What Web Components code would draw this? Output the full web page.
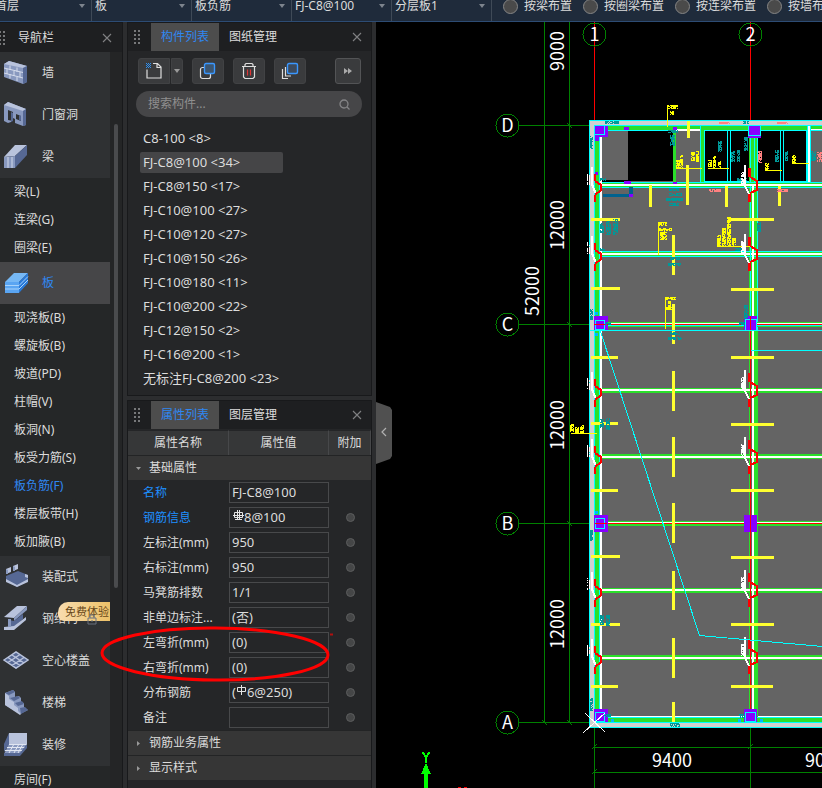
<!DOCTYPE html>
<html lang="zh-CN">
<head>
<meta charset="utf-8">
<title>板负筋</title>
<style>
html,body{margin:0;height:100%;background:#000;overflow:hidden}
body{font:12px/16px "Noto Sans","Noto Sans CJK SC",sans-serif;color:#dcdcdc}
</style>
</head>
<body>
<cad-app></cad-app>
<script>
const define=(name,html,setup)=>{
  const t=document.createElement('template');
  t.innerHTML='<style>*{box-sizing:border-box}button,input,select{font:inherit;color:inherit;margin:0}button{cursor:pointer}</style>'+html;
  customElements.define(name,class extends HTMLElement{
    connectedCallback(){
      if(this.shadowRoot)return;
      const r=this.attachShadow({mode:'open'});
      r.append(t.content.cloneNode(true));
      if(setup)setup(this,r);
    }
  });
};

/* ---------- top option bar ---------- */
define('drop-field',`<style>
:host{display:block;flex:0 0 100px;border-right:1px solid #3f4a57;position:relative}
select{appearance:none;width:100%;height:100%;border:0;background:none;padding:0 20px 0 3px;outline:0;line-height:16px}
option{background:#1f2b3b}
svg{position:absolute;right:6px;top:14px;pointer-events:none}
</style><select></select><svg width="6" height="4"><path d="M0 0h6L3 4z" fill="#7d848d"/></svg>`,
(h,r)=>{const s=r.querySelector('select');s.setAttribute('aria-label',h.getAttribute('label'));s.add(new Option(h.getAttribute('value')));});

define('radio-field',`<style>
:host{display:block;flex:none;line-height:12px}
label{display:flex;align-items:center;gap:6px;height:100%;white-space:nowrap}
input{appearance:none;width:15px;height:15px;border-radius:50%;background:#4a4a4a;border:1px solid #858585}
input:checked{background:#2d8cf0}
</style><label><input type="radio" name="place"><slot></slot></label>`);

define('top-bar',`<style>
:host{display:block;height:22px;overflow:hidden;background:#1f2b3b;border-bottom:1px solid #2d4c74}
div{display:flex;height:32px;margin-top:-10px;margin-left:-8px}
section{display:flex;gap:11px;padding-left:11px}
</style><div>
<drop-field label="楼层" value="首层"></drop-field><drop-field label="构件大类" value="板"></drop-field><drop-field label="构件类型" value="板负筋"></drop-field><drop-field label="构件" value="FJ-C8@100"></drop-field><drop-field label="分层" value="分层板1"></drop-field>
<section><radio-field>按梁布置</radio-field><radio-field>按圈梁布置</radio-field><radio-field>按连梁布置</radio-field><radio-field>按墙布置</radio-field></section></div>`);

/* ---------- shared small parts ---------- */
define('drag-grip',`<style>:host{display:block;width:6px;height:14px}svg{display:block}</style>
<svg width="6" height="14" fill="#77787a"><path d="M0 0h2v2H0zM4 0h2v2H4zM0 4h2v2H0zM4 4h2v2H4zM0 8h2v2H0zM4 8h2v2H4zM0 12h2v2H0zM4 12h2v2H4z"/></svg>`);
define('close-button',`<style>:host{display:block}button{display:block;border:0;background:none;padding:0;width:10px;height:10px}svg{display:block}</style>
<button aria-label="关闭"><svg width="10" height="10" stroke="#808183" stroke-width="1.1"><path d="M1 1l8 8M9 1l-8 8"/></svg></button>`);

/* ---------- navigation ---------- */
const L='#b9c3dc',M='#8999bf',D='#566894';
const navIcons={
wall:`<path d="M1 4l5-3 18 5v16l-4 2L1 17z" fill="${M}"/><path d="M1 4l5-3 18 5-4 2z" fill="${L}"/><path d="M20 8l4-2v16l-4 2z" fill="${D}"/><path d="M1 8l19 4.500M1 13l19 5M7 5.500V10M14 7.500V12M4 9v5M11 11v5M17 12v5M7 14v4.500M14 17v4" stroke="#d5dcec" fill="none"/>`,
door:`<path d="M1 3l4-3 18 7v16l-3 1-8-3v-4l-4-2v5l-3 1-4-2z" fill="${M}"/><path d="M1 3l4-3 18 7-3 2z" fill="${L}"/><path d="M20 9l3-2v16l-3 1z" fill="${D}"/><path d="M5 8l5 2v9l-5-1z" fill="#2f3133"/><path d="M13 12l5 2v5l-5-2z" fill="#2f3133"/><path d="M8 10l2 1v8l-2 1zM16 13l2 1v5l-2-1z" fill="${D}"/>`,
beam:`<path d="M1 13L12 1h12L12 12z" fill="${L}"/><path d="M1 13l11-1v12H1z" fill="${M}"/><path d="M12 12L24 1v10L12 24z" fill="${D}"/><path d="M5 13v11M9 13v11" stroke="${L}" stroke-width="1.500"/>`,
slab:`<path d="M2 12L11 3h14l-9 9z" fill="#76b8f5"/><path d="M2 12h14v11H2z" fill="#5aa5f2"/><path d="M16 12l9-9v10l-9 10z" fill="#2879d8"/><path d="M2 15.500h14l9-9M2 19h14l9-9" stroke="#a8d3fb" fill="none"/>`,
prefab:`<path d="M3 12l12-5 10 4v6l-11 6-11-7z" fill="${D}"/><path d="M3 15l11 6 11-6v3l-11 5-11-5z" fill="${L}"/><path d="M3 5l5-2v5l-5 2zM10 2l5-2v5l-5 2z" fill="${L}"/><path d="M3 5l2 1v4l-2 0zM10 2l2 1v4l-2 0z" fill="${M}"/><path d="M22 10l3 1v3l-3-1z" fill="${L}"/>`,
steel:`<path d="M1 11L14 0h10L11 12z" fill="${L}"/><path d="M11 12L24 0v4L11 15z" fill="${M}"/><path d="M6 14l5 1 9-7v5l-9 8H6z" fill="${D}"/><path d="M1 21l10-1 12-9v3L11 24H1z" fill="${L}"/><path d="M5 13h3v8H5z" fill="${M}"/>`,
hollow:`<path d="M1 12L13 4l12 8-12 9z" fill="${D}"/><path d="M1 12L13 4l12 8-12 8zM5 9.500l12 8M9 7l12 8M5 14.500L17 6.500M9 17.500L21 9.500" stroke="${L}" stroke-width="1.500" fill="none"/>`,
stairs:`<path d="M2 3l8-3 2 2v5l4-1 2 2v4l3 1v4l4 3-8 4L2 15z" fill="${M}"/><path d="M2 3l8-3 2 2-6 3zM7 8l8-2 2 2-6 3zM12 13l7-2 2 3-6 2zM17 18l5-1 3 3-7 4z" fill="${D}"/><path d="M2 3l4 3v3l5 3v3l4 3v3l3 3-1 1L2 15z" fill="${L}"/>`,
finish:`<path d="M6 1h18v12H5z" fill="${L}"/><path d="M6 1L1 12v8l5-7z" fill="${D}"/><path d="M6 12h18l-7 10H1z" fill="${M}"/><path d="M6 12.500h18M4 15.500h18M2 18.500h17M11 12l-5 9M16 12l-5 9M20 12l-5 9" stroke="#e1e6f2" fill="none"/><path d="M1 21h16l7-9v4l-7 8H1z" fill="${D}"/>`};
define('nav-group',`<style>
:host{display:block;background:#2f3133}
:host([active]){background:#464648;color:#2f87f2}
button{display:flex;align-items:center;gap:13px;width:100%;height:42px;border:0;background:none;padding:0 0 0 3px;text-align:left;white-space:nowrap;position:relative}
svg{display:block;flex:none}
::slotted(trial-badge){position:absolute;right:0;top:4px}
</style><button><svg width="26" height="26" viewBox="0 0 26 26"></svg><span></span><slot></slot></button>`,
(h,r)=>{r.querySelector('svg').innerHTML=navIcons[h.getAttribute('icon')];r.querySelector('span').textContent=h.getAttribute('label');});
define('nav-item',`<style>
:host{display:block;background:#252728}
:host([active]){color:#2f87f2}
a{display:flex;align-items:center;height:28px;padding-left:14px;color:inherit;text-decoration:none;white-space:nowrap}
</style><a href="#"><slot></slot></a>`);
define('trial-badge',`<style>
:host{display:block;font-size:11px}
span{display:block;width:52px;height:19px;padding-left:7px;line-height:19px;color:#674719;background:linear-gradient(90deg,#f8dcae,#edc168);border-radius:10px 0 0 6px}
svg{position:absolute;left:29px;top:11px}
</style><span>免费体验</span><svg width="10" height="12" fill="none" stroke="#68717f"><path d="M1 5h8v6H1zM3 5V2h4v3M5 7v2"/></svg>`);
define('nav-panel',`<style>
:host{display:flex;flex-direction:column;flex:0 0 123px;background:#252728;border-top:1px solid #18191b;border-right:1px solid #18191b;overflow:hidden}
header{flex:0 0 29px;display:flex;align-items:center;background:#1e1f21;padding-right:10px}
drag-grip{margin-left:-1px}
h2{flex:1;margin:0 0 0 13px;font:inherit}
.body{flex:1;min-height:0;display:flex;overflow:hidden}
nav{flex:1;min-width:0}
.track{flex:0 0 12px;background:#242526;padding:72px 0 0 4px}
.thumb{width:4px;height:464px;border-radius:2px;background:#4a4b4d}
</style>
<header><drag-grip></drag-grip><h2>导航栏</h2><close-button></close-button></header>
<div class="body"><nav>
<nav-group icon="wall" label="墙"></nav-group><nav-group icon="door" label="门窗洞"></nav-group><nav-group icon="beam" label="梁"></nav-group>
<nav-item>梁(L)</nav-item><nav-item>连梁(G)</nav-item><nav-item>圈梁(E)</nav-item>
<nav-group icon="slab" label="板" active></nav-group>
<nav-item>现浇板(B)</nav-item><nav-item>螺旋板(B)</nav-item><nav-item>坡道(PD)</nav-item><nav-item>柱帽(V)</nav-item><nav-item>板洞(N)</nav-item><nav-item>板受力筋(S)</nav-item><nav-item active>板负筋(F)</nav-item><nav-item>楼层板带(H)</nav-item><nav-item>板加腋(B)</nav-item>
<nav-group icon="prefab" label="装配式"></nav-group><nav-group icon="steel" label="钢结构"><trial-badge></trial-badge></nav-group><nav-group icon="hollow" label="空心楼盖"></nav-group><nav-group icon="stairs" label="楼梯"></nav-group><nav-group icon="finish" label="装修"></nav-group>
<nav-item>房间(F)</nav-item>
</nav><div class="track"><div class="thumb"></div></div></div>`);

/* ---------- dock panels ---------- */
define('dock-panel',`<style>
:host{display:flex;flex-direction:column;background:#252628;border:1px solid #18191b}
header{flex:0 0 28px;display:flex;align-items:center;background:#1e1f21;padding:0 9px 0 6px}
[role=tablist]{flex:1;display:flex;margin-left:11px;height:100%}
button{border:0;background:none;padding:0 10px;height:28px;white-space:nowrap}
button[aria-selected=true]{background:#4d4d4d;color:#2f87f2}
</style><header><drag-grip></drag-grip><div role="tablist"><button role="tab" aria-selected="true"></button><button role="tab" aria-selected="false"></button></div><close-button></close-button></header><slot></slot>`,
(h,r)=>{const n=h.getAttribute('tabs').split(',');r.querySelectorAll('[role=tab]').forEach((b,i)=>b.textContent=n[i]);});

define('tool-row',`<style>
:host{display:flex;gap:9px;padding:7px 10px 7px 10px}
button{width:32px;height:26px;border:1px solid #414244;background:#3a3b3d;border-radius:3px;padding:0;display:grid;place-items:center}
.split{display:flex;gap:1px}
.split button:first-child{border-radius:3px 0 0 3px}
.split .arrow{width:12px;border-radius:0 3px 3px 0}
.more{width:26px;margin-left:auto;border-color:#535456}
svg{display:block;fill:none;stroke:#dedede;stroke-width:1.200}
</style>
<div class="split"><button aria-label="新建"><svg width="18" height="18"><path d="M2 7.500V16h14V5l-3.500-3.500H8M12 2v3.500h4"/><path d="M1 1h1v1H1zM3 1h1v1H3zM5 1h1v1H5zM2 2h1v1H2zM4 2h1v1H4zM1 3h1v1H1zM3 3h1v1H3zM5 3h1v1H5zM2 4h1v1H2zM4 4h1v1H4zM1 5h1v1H1zM3 5h1v1H3zM5 5h1v1H5z" fill="#2d8ff0" stroke="none"/></svg></button><button class="arrow" aria-label="新建选项"><svg width="6" height="4"><path d="M0 0h6L3 4z" fill="#999" stroke="none"/></svg></button></div>
<button aria-label="复制"><svg width="18" height="18"><rect x="1.500" y="5.500" width="10" height="11" rx="2"/><rect x="5.500" y="1.500" width="10" height="10" rx="1.500" fill="#3d5670" stroke="#3a97ff" stroke-width="1.400"/></svg></button>
<button aria-label="删除"><svg width="18" height="18"><path d="M2 4.500h14M5 4V2.500l1-1h6l1 1V4M3.500 5v10l1.500 1.500h8l1.500-1.500V5"/><path d="M7.500 7.500v6M10.500 7.500v6" stroke="#e03535"/></svg></button>
<button aria-label="层间复制"><svg width="18" height="18"><path d="M1.500 7v9.500H7M4.500 5v9H10"/><rect x="6.500" y="1.500" width="10" height="10" rx="1.500" fill="#3d4b5e" stroke="#3a97ff" stroke-width="1.400"/></svg></button>
<button class="more" aria-label="更多"><svg width="8" height="6"><path d="M0 0l4 3-4 3zM4 0l4 3-4 3z" fill="#aaa" stroke="none"/></svg></button>`);

define('search-box',`<style>
:host{display:block;padding:0 9px 0 8px}
label{display:flex;align-items:center;height:26px;border-radius:13px;background:#464648;padding:0 12px}
input{flex:1;min-width:0;border:0;background:none;outline:0;padding:0}
input::placeholder{color:#8f8f8f;opacity:1}
</style><label><input type="search" aria-label="搜索构件" placeholder="搜索构件..."><svg width="11" height="11" fill="none" stroke="#858587" stroke-width="1.300"><circle cx="5" cy="5" r="4"/><path d="M8 8l2.500 2.500"/></svg></label>`);

define('component-list',`<style>
:host{display:block;padding:9px 12px 5px;font-size:13px}
ul{margin:0;padding:0;list-style:none}
li{height:24px;display:flex;align-items:center}
a{width:143px;padding:0 3px;height:21px;line-height:21px;border-radius:2px;color:inherit;text-decoration:none;white-space:nowrap}
a.on{background:#454547}
</style><ul></ul>`,
(h,r)=>{r.querySelector('ul').innerHTML=['C8-100 <8>','FJ-C8@100 <34>','FJ-C8@150 <17>','FJ-C10@100 <27>','FJ-C10@120 <27>','FJ-C10@150 <26>','FJ-C10@180 <11>','FJ-C10@200 <22>','FJ-C12@150 <2>','FJ-C16@200 <1>','无标注FJ-C8@200 <23>'].map((t,i)=>`<li><a href="#"${i==1?' class="on"':''}>${t.replace('<','&lt;').replace('>','&gt;')}</a></li>`).join('');});

const bar3='<svg width="12" height="13" fill="none" stroke="#e4e4e4"><path d="M2.500 2.500h8v5h-8zM5.500 0v10M7.500 0v10M1 5.500h11M3 9.500h7"/></svg>';
const bar1='<svg width="11" height="13" fill="none" stroke="#e4e4e4"><path d="M1.500 2.500h8v4h-8zM5.500 0v10"/></svg>';
const props=[['名称','','','FJ-C8@100'],['钢筋信息','',bar3,'8@100'],['左标注(mm)','','','950'],['右标注(mm)','','','950'],['马凳筋排数','','','1/1'],['非单边标注...','','','(否)'],['左弯折(mm)','','','(0)'],['右弯折(mm)','','','(0)'],['分布钢筋','(',bar1,'6@250)'],['备注','','','']];
define('property-table',`<style>
:host{display:block;padding-top:1px}
table{width:100%;border-collapse:separate;border-spacing:0;table-layout:fixed}
th,td{padding:0;font-weight:400;height:25px}
thead th{background:#363738;border-top:1px solid #242527;border-right:1px solid #47484a;text-align:center}
.g th{background:#363636;border-top:1px solid #232425;padding:0}
.g button{display:flex;align-items:center;gap:8px;border:0;background:none;padding:0 0 0 8px;height:24px}
.g svg{display:block;width:5px}
tr.p th{text-align:left;padding-left:15px;white-space:nowrap}
.key th{color:#1e8fff}
.f{display:flex;align-items:center;height:21px;border:1px solid #48494b;padding:0 0 2px 2px;font-size:13px}
.f svg{flex:none}
.f input{flex:1;min-width:0;width:100%;height:17px;border:0;background:none;padding:0;outline:0}
.x input{appearance:none;display:block;width:9px;height:9px;border-radius:50%;margin:0 auto;background:#454647;border:1px solid #5c5d5e}
</style><table><colgroup><col style="width:101px"><col style="width:100px"><col></colgroup>
<thead><tr><th>属性名称</th><th>属性值</th><th>附加</th></tr></thead><tbody></tbody></table>`,
(h,r)=>{
  const g=(t,open)=>`<tr class="g"><th colspan="3"><button aria-expanded="${open}"><svg height="5"><path d="${open?'M0 1h5L2.5 4z':'M1 0v5L4 2.500z'}" fill="#999"/></svg>${t}</button></th></tr>`;
  r.querySelector('tbody').innerHTML=g('基础属性',true)+props.map((p,i)=>`<tr class="p${i<2?' key':''}"><th><label for="p${i}">${p[0]}</label></th><td><div class="f">${p[1]?`<span>${p[1]}</span>`:''}${p[2]}<input id="p${i}" value="${p[3]}"></div></td><td class="x">${i?`<input type="checkbox" aria-label="附加 ${p[0]}">`:''}</td></tr>`).join('')+g('钢筋业务属性',false)+g('显示样式',false);
});

/* ---------- drawing canvas ---------- */
function drawPlan(){
  const o=[];let seed=7;
  const rnd=()=>(seed=(seed*16807)%2147483647)/2147483647;
  const R=(x,y,w,h,f)=>o.push(`<rect x="${x}" y="${y}" width="${w}" height="${h}" fill="${f}"/>`);
  const B=(x,y,w,h,c)=>o.push(`<rect x="${x+.5}" y="${y+.5}" width="${w}" height="${h}" fill="none" stroke="${c}"/>`);
  const P=(d,c,w=1)=>o.push(`<path d="${d}" fill="none" stroke="${c}" stroke-width="${w}"/>`);
  const T=(x,y,t,rot)=>o.push(`<text x="${x}" y="${y}"${rot?` transform="rotate(-90 ${x} ${y})"`:''}>${t}</text>`);
  const N=(c,...a)=>a.forEach(([x,y,w,h])=>{let d='';for(let j=0;j<h;j++)for(let i=0;i<w;i++)if(rnd()<.8)d+=`M${x+i} ${y+j}h1v1h-1z`;o.push(`<path d="${d}" fill="${c}"/>`);});
  const G='#008000',W='#fff',C='#00ffff',g='#2adf2a',S='#646464',V='#8800ff',Y='#ffff30',K='#d0d0d0',E='#ff0000',TE='#009999';
  // dimension lines
  R(544,22,1,701,G);R(569,22,1,701,G);
  [125,324,523,722].forEach(y=>{R(519,y,75,1,G);P(`M567 ${y-2}l5 5`,G)});
  P('M542 720l5 5',G);
  R(594,727,1,61,G);R(750,727,1,61,G);R(594,747,228,1,G);R(594,772,228,1,G);
  P('M592 749l5-5M748 749l5-5M592 774l5-5',G);
  R(594,22,1,100,E);R(750,22,1,100,E);
  // slab and perimeter
  R(589,120,233,608,S);
  R(589,120,233,6,K);R(589,120,6,608,K);R(589,723,233,5,K);
  R(589,120,233,1,C);R(589,120,1,608,C);R(589,727,233,1,C);
  R(595,126,227,4,g);R(595,126,4,597,g);R(594,125,228,1,C);R(602,130,220,1,C);
  R(594,126,1,597,C);R(599,130,1,588,C);R(600,130,2,588,W);
  R(600,716,222,2,W);R(600,717,222,1,C);R(600,718,222,4,g);R(594,722,228,1,C);
  // upper rooms
  R(628,131,45,50,'#000');R(602,180,26,2,'#000');R(673,130,3,52,g);R(676,129,25,2,W);
  R(701,126,110,59,'#000');R(701,126,4,59,g);
  R(701,126,106,4,g);R(701,182,110,3,g);
  B(700,125,107,60,C);B(704,130,102,51,C);
  [727,730,780,783].forEach(x=>R(x,130,1,52,C));
  R(808,126,2,58,W);R(810,126,1,60,C);R(811,129,11,2,W);R(811,130,11,1,C);
  // axis 2 beam
  R(749,130,9,587,g);R(752,186,2,531,W);R(750,126,1,225,C);R(757,126,1,205,C);R(754,130,1,54,C);
  R(751,351,1,366,S);R(750,331,1,386,E);
  // transverse beams
  [182,251].forEach(y=>{R(602,y,220,6,g);R(602,y,220,1,C);R(602,y+2,220,2,W);R(602,y+5,220,1,C);});
  [388,454,588,655].forEach((y,i)=>{R(602,y,220,5,g);R(600,y+(i%2?2:1),222,2,W);});
  [322,521].forEach(y=>{R(602,y,220,5,g);R(602,y+1,220,1,W);R(602,y+2,220,1,E);});
  R(602,325,220,1,C);R(752,186,2,531,W);
  R(750,186,1,145,C);R(750,351,1,366,E);
  // columns
  [[595,126,10,11],[600,126,8,11],[595,136,4,5],[594,316,14,15],[594,515,14,17],[594,709,14,13],[748,126,13,12],[744,316,13,15],[744,515,13,17],[744,709,13,13],[624,127,5,3],[673,127,4,3],[595,172,3,3],[624,181,7,3],[673,182,4,2]].forEach(a=>R(...a,V));
  [[594,125,10,9],[595,320,9,9],[595,518,9,10],[595,712,9,9],[748,125,12,10],[745,319,11,11],[745,712,10,9]].forEach(a=>B(...a,C));
  [[141,175],[332,183],[533,176]].forEach(([y,h])=>{R(599,y,1,h,C);R(600,y,2,h,W);});
  R(750,316,1,16,E);R(750,515,1,17,E);R(594,324,14,1,E);R(595,523,12,1,E);
  R(603,194,28,3,'#00628f');R(629,187,4,8,'#00628f');R(629,194,4,3,V);
  [[595,312],[595,333],[595,511],[611,719],[738,719],[760,719]].forEach(([x,y])=>R(x,y,3,3,'#00b4ff'));
  // bar marks
  [[235,40],[304,40],[371,40],[437,40],[503,40],[571,39],[638,40],[702,20]].forEach(([y,h])=>R(672,y,3,h,Y));
  [[649,185,22],[686,165,40],[687,121,17],[725,186,21],[778,186,20]].forEach(([x,y,h])=>R(x,y,3,h,Y));
  [[218,29],[287,29],[356,27],[422,27],[489,27],[555,29],[623,29],[685,27]].forEach(([y,w])=>R(591,y,w,3,Y));
  [218,288,356,423,489,556,623,685].forEach(y=>R(731,y,y==685?42:43,3,Y));
  // annotation leaders
  [[667,105,1,22],[676,168,26,1],[708,168,21,1],[765,170,17,1],[792,163,17,1],[658,222,1,33],[717,246,33,1],[665,297,1,32],[571,433,26,1]].forEach(a=>R(...a,'#ff0'));
  N('#ff0',[668,105,10,4],[670,111,4,4],[676,160,4,8],[680,155,3,13],[691,152,4,9],[696,151,3,11],[708,160,4,7],[713,156,3,12],[718,161,3,7],[765,163,4,7],[792,155,4,8],[659,222,8,4],[659,228,13,3],[660,232,4,8],[664,231,3,9],[717,235,4,11],[722,228,4,18],[727,217,4,29],[732,238,4,8],[666,297,10,3],[668,301,3,9],[666,307,6,3],[570,424,4,8],[575,427,4,6],[580,425,4,8]);
  N(TE,[605,121,14,3],[590,136,3,13],[668,130,10,3],[670,135,5,11],[743,121,6,3],[744,137,4,14],[718,141,4,11],[731,151,4,11],[737,150,3,12],[775,150,4,12],[785,151,3,10],[669,188,10,3],[668,193,14,3],[666,198,17,3],[669,203,10,3],[737,178,10,3],[600,178,6,3],[600,223,4,10],[606,221,5,14],[613,219,5,16],[757,222,4,10],[669,257,11,3],[668,263,13,3],[600,248,5,3],[735,248,8,3],[590,309,3,11],[605,322,6,3],[744,305,4,14],[739,322,6,3],[670,332,10,3],[668,337,14,3],[600,419,4,9],[606,418,4,12],[590,530,3,11],[600,615,4,10],[606,615,4,11],[590,698,3,13],[603,714,8,3],[739,714,6,4],[670,723,10,4],[811,151,5,10]);
  N('#ff8080',[719,122,11,2],[777,122,11,2],[709,189,12,3],[777,189,11,3],[758,151,4,12],[817,152,5,10]);
  // break marks on both axes
  [185,254,390,457,590,657].forEach(y=>{
    P(`M591.500 ${y-18}v16l4 10`,W,2);N(W,[587,y-12,1,12],[589,y-10,1,10]);
    R(594,y-11,2,7,E);R(594,y+10,2,7,E);P(`M595 ${y-4}l6 4v5l-6 5`,E,2);
    P(`M745 ${y-20}v21l4 8`,W,2);N(W,[741,y-13,3,12]);
    R(748,y-17,3,9,E);R(748,y+9,3,8,E);P(`M750 ${y-8}l7 4v9l-7 3`,E,2);
  });
  // region outline
  R(589,330,233,1,C);R(751,350,71,1,C);P('M600.500 331.500L699.500 635.500L822.500 646.500',C);
  P('M583.500 732.500l22-20',W,1);P('M585.500 713.500l20 19',W,1);
  // axis bubbles
  [[594,34,'1'],[750,34,'2'],[507,125,'D'],[507,324,'C'],[507,523,'B'],[507,722,'A']].forEach(([x,y,t])=>{
    o.push(`<circle cx="${x+.5}" cy="${y+.5}" r="11.500" fill="none" stroke="${G}"/>`);T(x+.5,y+7,t,0);});
  T(564,51,'9000',1);[225,425,624].forEach(y=>T(564,y,'12000',1));T(539,291,'52000',1);T(672,767,'9400');T(825,767,'9000');
  // UCS marker
  P('M422.500 752l3.500 5 3.500-5M426 757v6','#0f0',2);o.push('<path d="M426 763l5 11h-10z" fill="#0f0"/>');R(424,774,4,14,'#0f0');R(458,787,3,1,E);R(464,787,3,1,E);
  return o.join('');
}
define('plan-canvas',`<style>
:host{display:block;flex:1;min-width:0;position:relative;background:#000;overflow:hidden}
.plan{display:block;width:100%;height:100%;shape-rendering:crispEdges}
text{font-family:"Noto Sans CJK SC",sans-serif;font-size:18px;fill:#fff;text-anchor:middle}
button{position:absolute;left:0;top:380px;width:16px;height:62px;border:0;padding:0;background:#505050;clip-path:polygon(0 0,14px 5px,16px 8px,16px 54px,14px 57px,0 62px)}
</style><svg class="plan" role="img" aria-label="平面图"><g transform="translate(-376 -22)">${drawPlan()}</g></svg>
<button aria-label="收起面板"><svg width="6" height="10" fill="none" stroke="#b0b0b0" stroke-width="1.200"><path d="M5 1L1 5l4 4"/></svg></button>`);

/* red pen ellipse laid over the panels */
define('pen-mark',`<style>:host{display:block;position:absolute;left:100px;top:624px;pointer-events:none}svg{display:block}</style>
<svg width="236" height="60" fill="none" stroke="#f00"><ellipse cx="115" cy="30" rx="113" ry="26" stroke-width="3" transform="rotate(.5 115 30)"/><path d="M230 10.500h3" stroke="#b01010" stroke-width="2"/></svg>`);

define('cad-app',`<style>
:host{display:flex;flex-direction:column;height:100vh;position:relative;overflow:hidden}
main{flex:1;min-height:0;display:flex;background:#2c2d2f}
.docks{flex:0 0 245px;display:flex;flex-direction:column;gap:4px;margin:0 4px 0 4px;min-height:0}
.docks dock-panel:last-child{flex:1;min-height:0;overflow:hidden;border-bottom:0}
</style><top-bar></top-bar><main><nav-panel></nav-panel><div class="docks">
<dock-panel tabs="构件列表,图纸管理"><tool-row></tool-row><search-box></search-box><component-list></component-list></dock-panel>
<dock-panel tabs="属性列表,图层管理"><property-table></property-table></dock-panel>
</div><plan-canvas></plan-canvas></main><pen-mark></pen-mark>`);
</script>
</body>
</html>
